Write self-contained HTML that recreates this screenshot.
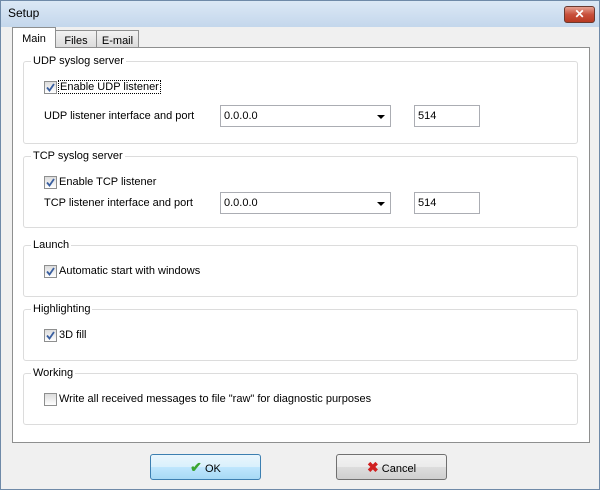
<!DOCTYPE html><html><head><style>
body{margin:0;width:600px;height:490px;overflow:hidden;font-family:"Liberation Sans",sans-serif;font-size:11px;color:#000;}
.win{position:absolute;left:0;top:0;width:598px;height:488px;border:1px solid #6f8aa8;background:linear-gradient(#dbe8f5,#c4d7ec 26px,#f0f0f0 26px);}
.title{position:absolute;left:7px;top:5px;font-size:12px;}
.close{position:absolute;left:563px;top:5px;width:29px;height:15px;border:1px solid #6a3a30;border-radius:3px;background:linear-gradient(#e6a191,#c8503c 50%,#b83a22);color:#fff;text-align:center;font-weight:bold;font-size:12px;line-height:15px;}
.panel{position:absolute;left:11px;top:46px;width:576px;height:394px;border:1px solid #8e8f8f;background:#fff;}
.tab{position:absolute;top:29px;height:17px;border:1px solid #8e8f8f;border-bottom:none;background:linear-gradient(#f2f2f2,#dcdcdc);line-height:20px;white-space:nowrap;box-sizing:border-box;text-align:center;}
.g{position:absolute;left:22px;width:553px;border:1px solid #dcdcdc;border-radius:3px;}
.lg{position:absolute;left:30px;background:#fff;padding:0 2px;}
.cb{position:absolute;width:11px;height:11px;border:1px solid #8e8f8f;background:linear-gradient(#dcdcdc,#fff);}
.cb svg{position:absolute;left:0;top:0}
.t{position:absolute;white-space:nowrap}
.combo{position:absolute;left:219px;border:1px solid #abadb3;line-height:20px;padding-left:3px;box-sizing:border-box;width:171px;height:22px;}
.combo:after{content:"";position:absolute;right:5px;top:9px;border:4px solid transparent;border-top:4px solid #000;}
.ed{position:absolute;left:413px;width:66px;height:22px;border:1px solid #abadb3;box-sizing:border-box;line-height:20px;padding-left:3px;}
.btn{position:absolute;top:453px;width:111px;height:26px;border:1px solid #707070;border-radius:3px;box-sizing:border-box;background:linear-gradient(#f2f2f2,#ebebeb 50%,#dddddd 51%,#cfcfcf);text-align:center;line-height:24px;}
</style></head><body><div class="win">
<div class="title">Setup</div><div class="close">✕</div>
<div class="panel"></div>
<div class="tab" style="left:54px;width:42px;">Files</div>
<div class="tab" style="left:95px;width:43px;">E-mail</div>
<div class="tab" style="left:11px;top:26px;height:21px;width:44px;background:#fff;line-height:22px">Main</div>

<div class="g" style="top:60px;height:81px"></div><div class="lg t" style="top:54px">UDP syslog server</div>
<div class="cb" style="left:43px;top:80px"><svg width="11" height="11"><path d="M2 5.5L4.5 8.5L9 2" stroke="#3a5fa0" stroke-width="1.8" fill="none"/></svg></div>
<div class="t" style="left:57px;top:79px;border:1px dotted #000;padding:0 1px">Enable UDP listener</div>
<div class="t" style="left:43px;top:109px">UDP listener interface and port</div>
<div class="combo" style="top:104px">0.0.0.0</div><div class="ed" style="top:104px">514</div>

<div class="g" style="top:155px;height:70px"></div><div class="lg t" style="top:149px">TCP syslog server</div>
<div class="cb" style="left:43px;top:175px"><svg width="11" height="11"><path d="M2 5.5L4.5 8.5L9 2" stroke="#3a5fa0" stroke-width="1.8" fill="none"/></svg></div>
<div class="t" style="left:58px;top:175px">Enable TCP listener</div>
<div class="t" style="left:43px;top:196px">TCP listener interface and port</div>
<div class="combo" style="top:191px">0.0.0.0</div><div class="ed" style="top:191px">514</div>

<div class="g" style="top:244px;height:50px"></div><div class="lg t" style="top:238px">Launch</div>
<div class="cb" style="left:43px;top:264px"><svg width="11" height="11"><path d="M2 5.5L4.5 8.5L9 2" stroke="#3a5fa0" stroke-width="1.8" fill="none"/></svg></div>
<div class="t" style="left:58px;top:264px">Automatic start with windows</div>

<div class="g" style="top:308px;height:50px"></div><div class="lg t" style="top:302px">Highlighting</div>
<div class="cb" style="left:43px;top:328px"><svg width="11" height="11"><path d="M2 5.5L4.5 8.5L9 2" stroke="#3a5fa0" stroke-width="1.8" fill="none"/></svg></div>
<div class="t" style="left:58px;top:328px">3D fill</div>

<div class="g" style="top:372px;height:50px"></div><div class="lg t" style="top:366px">Working</div>
<div class="cb" style="left:43px;top:392px"></div>
<div class="t" style="left:58px;top:392px">Write all received messages to file "raw" for diagnostic purposes</div>

<div class="btn" style="left:149px;border-color:#3c7fb1;background:linear-gradient(#eaf6fd,#d9f0fc 50%,#bee6fd 51%,#a7d9f5)"><span style="color:#3aa530;font-weight:bold;font-size:14px">✔</span> OK</div>
<div class="btn" style="left:335px"><span style="color:#d02020;font-weight:bold;font-size:14px">✖</span> Cancel</div>
</div></body></html>
